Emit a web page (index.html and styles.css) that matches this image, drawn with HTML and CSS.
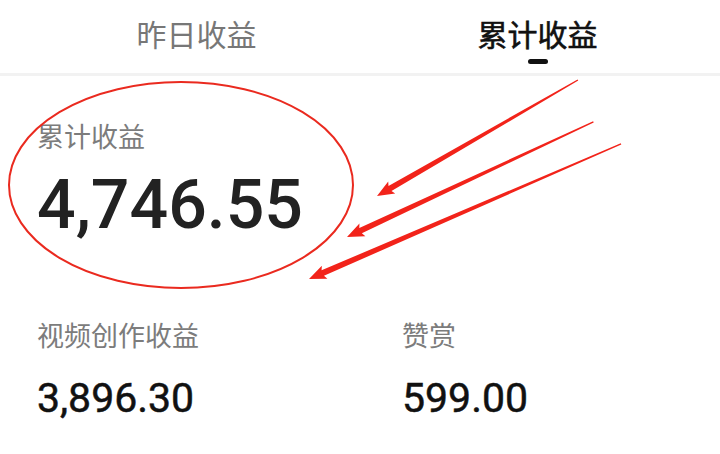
FILE: index.html
```html
<!DOCTYPE html>
<html lang="zh-CN">
<head>
    <meta charset="UTF-8">
    <meta name="viewport" content="width=device-width, initial-scale=1.0">
    <title>累计收益</title>
    <link rel="stylesheet" href="styles.css">
</head>
<body>
    <div class="page">
        <div class="tabs">
            <div class="tab">昨日收益</div>
            <div class="tab active">累计收益</div>
        </div>

        <div class="total">
            <div class="label">累计收益</div>
            <div class="total-num">4,746.55</div>
        </div>

        <div class="stats">
            <div class="stat">
                <div class="label">视频创作收益</div>
                <div class="stat-num">3,896.30</div>
            </div>
            <div class="stat">
                <div class="label">赞赏</div>
                <div class="stat-num">599.00</div>
            </div>
        </div>

        <!-- красная разметка поверх скриншота -->
        <svg class="marks" width="720" height="454" viewBox="0 0 720 454">
            <ellipse cx="181" cy="185" rx="172" ry="103" fill="none" stroke="#ea2a1f" stroke-width="2"/>
            <g fill="#f2231a">
                <polygon transform="translate(377 196) rotate(-30)" points="0,0 17,-7 15,-3 232,-0.7 232,0.7 15,3 17,7"/>
                <polygon transform="translate(347 237) rotate(-25.05)" points="0,0 17,-7 15,-3 272,-0.7 272,0.7 15,3 17,7"/>
                <polygon transform="translate(309 279) rotate(-23.4)" points="0,0 17,-7 15,-3 340,-0.7 340,0.7 15,3 17,7"/>
            </g>
        </svg>
    </div>
</body>
</html>
```

FILE: styles.css
```css
/* Основные стили */
body {
    margin: 0;
    padding: 0;
    background-color: #fff;
    font-family: "Noto Sans CJK SC", "Noto Sans", sans-serif;
    color: #111;
}
.page {
    position: relative;
    width: 720px;
    height: 454px;
    overflow: hidden;
}
.tabs {
    display: grid;
    grid-template-columns: 341px 341px;
    padding: 18px 12px 0 26px;
    height: 55px;
    border-bottom: 3px solid #f2f2f2;
}
.tab {
    text-align: center;
    font-size: 30px;
    line-height: 30px;
    color: #777;
}
.tab.active {
    color: #111;
    -webkit-text-stroke: 0.6px #111;
}
.tab.active::after {
    content: "";
    display: block;
    width: 20px;
    height: 5px;
    border-radius: 3px;
    background-color: #111;
    margin: 11px auto 0;
}
.label {
    font-size: 27px;
    line-height: 27px;
    color: #7c7c7c;
}
.total {
    padding: 46px 0 0 37px;
}
.total-num {
    margin-top: 22px;
    font-family: Roboto, "Liberation Sans", sans-serif;
    font-size: 68px;
    line-height: 68px;
    font-weight: 500;
    color: #222;
}
.stats {
    display: grid;
    grid-template-columns: 365px 1fr;
    padding: 82px 0 0 37px;
}
.stat-num {
    margin-top: 30px;
    font-family: Roboto, "Liberation Sans", sans-serif;
    font-size: 41px;
    line-height: 41px;
    font-weight: 400;
    -webkit-text-stroke: 0.5px #111;
    color: #111;
}
.marks {
    position: absolute;
    top: 0;
    left: 0;
    pointer-events: none;
}
```
